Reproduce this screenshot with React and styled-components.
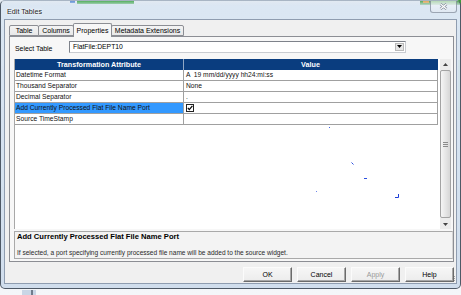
import React from "react";
import styled, { createGlobalStyle } from "styled-components";

const Global = createGlobalStyle`
  html, body { margin: 0; padding: 0; }
  body {
    width: 461px; height: 295px; overflow: hidden;
    background: #eef2f6;
    font-family: "Liberation Sans", Arial, sans-serif;
  }
  * { box-sizing: border-box; }
`;

const Desktop = styled.div`
  position: relative;
  width: 461px;
  height: 295px;
  overflow: hidden;
  background: linear-gradient(180deg, #e4ebf2 0%, #eef2f6 60%, #f4f6f9 100%);
`;

const BgPatch = styled.div`
  position: absolute;
  left: ${(p) => p.$x}px;
  top: ${(p) => p.$y}px;
  width: ${(p) => p.$w}px;
  height: ${(p) => p.$h}px;
  background: ${(p) => p.$c};
`;

const Window = styled.div`
  position: absolute;
  left: 0;
  top: 0;
  width: 461px;
  height: 289px;
  display: flex;
  flex-direction: column;
  padding: 0 3px 4px 3px;
  border: 1px solid #4e5966;
  border-top-color: rgba(78, 89, 102, 0.3);
  border-radius: 5px;
  background: linear-gradient(
    180deg,
    rgba(214, 227, 241, 0.2) 0px,
    rgba(218, 230, 243, 0.92) 5px,
    rgba(206, 220, 236, 0.95) 100%
  );
`;

const TitleBar = styled.div`
  height: 19px;
  display: flex;
  align-items: flex-start;
  justify-content: space-between;
  padding-left: 3px;
`;

const Title = styled.div`
  margin-top: 6px;
  font-size: 7.2px;
  line-height: 10px;
  color: #1b1b1b;
  text-shadow: 0 0 3px #ffffff, 0 0 2px #ffffff;
`;

const CloseBtn = styled.div`
  width: 27px;
  height: 12px;
  display: flex;
  align-items: center;
  justify-content: center;
  border: 1px solid rgba(90, 102, 120, 0.55);
  border-top: none;
  border-radius: 0 0 3px 3px;
  background: linear-gradient(180deg, rgba(255, 255, 255, 0.55), rgba(225, 233, 242, 0.7));
`;

const Client = styled.div`
  position: relative;
  flex: 1;
  display: flex;
  flex-direction: column;
  padding: 3px 2px 1px 4px;
  background: #f0f0f0;
  border: 1px solid #8f9db0;
`;

const TabStrip = styled.div`
  height: 13px;
  display: flex;
  align-items: flex-end;
`;

const Tab = styled.div`
  position: relative;
  z-index: ${(p) => (p.$active ? 1 : 0)};
  width: ${(p) => p.$w}px;
  height: ${(p) => (p.$active ? 14 : 11)}px;
  margin-bottom: ${(p) => (p.$active ? -1 : 0)}px;
  margin-left: ${(p) => (p.$first ? 0 : -1)}px;
  display: flex;
  align-items: ${(p) => (p.$active ? "flex-start" : "center")};
  justify-content: center;
  padding-top: ${(p) => (p.$active ? 2 : 0)}px;
  border: 1px solid #8c8e94;
  border-bottom: ${(p) => (p.$active ? "none" : "1px solid #8c8e94")};
  border-radius: 2px 2px 0 0;
  background: ${(p) =>
    p.$active ? "#f7f7f7" : "linear-gradient(180deg, #f4f4f4 0%, #e8e8e8 100%)"};
  font-size: 7px;
  line-height: 9px;
  color: #000;
  white-space: nowrap;
`;

const TabPage = styled.div`
  height: 226px;
  display: flex;
  flex-direction: column;
  padding: 3px 0 0 4px;
  border: 1px solid #8c8e94;
  background: #f7f7f7;
`;

const SelectRow = styled.div`
  height: 13px;
  display: flex;
  align-items: center;
`;

const Label = styled.div`
  width: 55px;
  padding-left: 1px;
  padding-top: 3px;
  font-size: 6.9px;
  color: #000;
`;

const Combo = styled.div`
  width: 337px;
  height: 12px;
  display: flex;
  align-items: center;
  justify-content: space-between;
  padding: 0 1px 0 3px;
  border: 1px solid #7e828a;
  border-right-color: #c9ccd1;
  border-bottom-color: #c9ccd1;
  background: #ffffff;
  font-size: 6.8px;
  color: #000;
`;

const DropBtn = styled.div`
  width: 9px;
  height: 8px;
  display: flex;
  align-items: center;
  justify-content: center;
  background: #e6e6e6;
  border: 1px solid #b9b9b9;
`;

const PropGrid = styled.div`
  margin-top: 6px;
  width: 439px;
  display: flex;
  flex-direction: column;
`;

const GridView = styled.div`
  height: 170px;
  width: 437px;
  display: flex;
  border-left: 1px solid #a8a8a8;
  background: #ffffff;
`;

const TableWrap = styled.div`
  position: relative;
  width: 425px;
  background: #ffffff;
`;

const Row = styled.div`
  display: grid;
  grid-template-columns: 169px 254px;
  height: 11px;
`;

const HeadCell = styled.div`
  height: 11px;
  background: #0a3d7f;
  border-right: 1px solid ${(p) => (p.$last ? "#0a3d7f" : "rgba(255,255,255,0.55)")};
  color: #ffffff;
  font-weight: bold;
  font-size: 7.2px;
  line-height: 11px;
  text-align: center;
  white-space: nowrap;
`;

const Cell = styled.div`
  height: 11px;
  display: flex;
  align-items: center;
  padding-left: ${(p) => (p.$value ? 2 : 1)}px;
  border-right: 1px solid #a0a0a0;
  border-bottom: 1px solid #a0a0a0;
  background: ${(p) => (p.$selected ? "#3399ff" : "#ffffff")};
  color: #111;
  font-size: 6.7px;
  line-height: 10px;
  white-space: pre;
  overflow: hidden;
`;

const Marks = styled.svg`
  position: absolute;
  left: 0;
  top: 0;
  pointer-events: none;
`;

const ScrollBar = styled.div`
  margin-left: 1px;
  width: 11px;
  display: flex;
  flex-direction: column;
  background: #ececec;
`;

const ScrollBtn = styled.div`
  height: 10px;
  display: flex;
  align-items: center;
  justify-content: center;
`;

const Thumb = styled.div`
  flex: 1;
  margin: 1px 0;
  display: flex;
  align-items: center;
  justify-content: center;
  border: 1px solid #a3a3a3;
  border-radius: 2px;
  background: linear-gradient(90deg, #f5f5f5 0%, #e6e6e6 50%, #d6d6d6 100%);
`;

const DescBox = styled.div`
  margin-top: 2px;
  height: 28px;
  width: 439px;
  padding: 0 0 0 2px;
  border: 1px solid #a9a9a9;
  border-right-color: #d4d4d4;
  background: #f3f3f3;
`;

const DescTitle = styled.div`
  font-weight: bold;
  font-size: 7.6px;
  line-height: 9px;
  color: #000;
  white-space: nowrap;
`;

const DescText = styled.div`
  margin-top: 7px;
  font-size: 6.55px;
  line-height: 9px;
  color: #2a2a2a;
  white-space: nowrap;
`;

const ButtonRow = styled.div`
  margin-top: 5px;
  display: flex;
  justify-content: flex-end;
  gap: 5px;
`;

const Btn = styled.div`
  width: 49px;
  height: 15px;
  display: flex;
  align-items: center;
  justify-content: center;
  border: 1px solid;
  border-color: #fbfbfb #6b6b6b #6b6b6b #fbfbfb;
  box-shadow: inset -1px -1px 0 #a7a7a7;
  background: linear-gradient(180deg, #f6f6f6 0%, #ececec 100%);
  font-size: 7px;
  color: ${(p) => (p.$disabled ? "#9a9a9a" : "#000")};
`;

const Grip = styled.svg`
  position: absolute;
  right: 0;
  bottom: 0;
`;

const rows = [
  { name: "Datetime Format", value: "A  19 mm/dd/yyyy hh24:mi:ss" },
  { name: "Thousand Separator", value: "None" },
  { name: "Decimal Separator", value: "." },
  { name: "Add Currently Processed Flat File Name Port", check: true, selected: true },
  { name: "Source TimeStamp", value: "" },
];

const tabs = [
  { label: "Table", w: 30 },
  { label: "Columns", w: 36 },
  { label: "Properties", w: 39, active: true },
  { label: "Metadata Extensions", w: 73 },
];

function CheckBox() {
  return (
    <svg width="8" height="8" viewBox="0 0 8 8">
      <rect x="0.5" y="0.5" width="7" height="7" fill="#fff" stroke="#222" />
      <path d="M1.8 3.8 L3.3 5.6 L6.4 1.9" fill="none" stroke="#000" strokeWidth="1.2" />
    </svg>
  );
}

export default function App() {
  return (
    <Desktop>
      <Global />
      <BgPatch $x={70} $y={0} $w={5} $h={3} $c="#4a7fd0" />
      <BgPatch $x={77} $y={0} $w={57} $h={4} $c="#36a33a" />
      <BgPatch $x={420} $y={0} $w={41} $h={5} $c="#3f9c38" />
      <BgPatch $x={423} $y={0} $w={6} $h={3} $c="#e49a35" />
      <BgPatch $x={458} $y={60} $w={3} $h={60} $c="#9ccf8c" />
      <BgPatch $x={22} $y={290} $w={14} $h={5} $c="#c9d6e6" />
      <BgPatch $x={31} $y={290} $w={2} $h={5} $c="#6f7c8c" />
      <Window>
        <TitleBar>
          <Title>Edit Tables</Title>
          <CloseBtn>
            <svg width="9" height="7" viewBox="0 0 9 7">
              <path d="M1.5 1 L7.5 6 M7.5 1 L1.5 6" stroke="#7d8795" strokeWidth="2.4" />
              <path d="M1.5 1 L7.5 6 M7.5 1 L1.5 6" stroke="#ffffff" strokeWidth="1.2" />
            </svg>
          </CloseBtn>
        </TitleBar>
        <Client>
          <TabStrip>
            {tabs.map((t, i) => (
              <Tab key={t.label} $w={t.w} $active={t.active} $first={i === 0}>
                {t.label}
              </Tab>
            ))}
          </TabStrip>
          <TabPage>
            <SelectRow>
              <Label>Select Table</Label>
              <Combo>
                <span>FlatFile:DEPT10</span>
                <DropBtn>
                  <svg width="5" height="3" viewBox="0 0 5 3">
                    <path d="M0 0 H5 L2.5 3 Z" fill="#000" />
                  </svg>
                </DropBtn>
              </Combo>
            </SelectRow>
            <PropGrid>
              <GridView>
                <TableWrap>
                  <Row>
                    <HeadCell>Transformation Attribute</HeadCell>
                    <HeadCell $last>Value</HeadCell>
                  </Row>
                  {rows.map((r) => (
                    <Row key={r.name}>
                      <Cell $selected={r.selected}>{r.name}</Cell>
                      <Cell $value>{r.check ? <CheckBox /> : r.value}</Cell>
                    </Row>
                  ))}
                  <Marks width="425" height="170" viewBox="0 0 425 170">
                    <rect x="314" y="68" width="1" height="1" fill="#3b63e6" />
                    <path d="M336.5 103.5 L338.5 105.5" stroke="#2a4fe0" strokeWidth="1" />
                    <rect x="349" y="119" width="3" height="1" fill="#2a4fe0" />
                    <rect x="301" y="132" width="1" height="1" fill="#6f86ea" />
                    <path d="M380 138.5 H383.5 V135" fill="none" stroke="#1f3fd8" strokeWidth="1" />
                  </Marks>
                </TableWrap>
                <ScrollBar>
                  <ScrollBtn>
                    <svg width="5" height="3" viewBox="0 0 5 3">
                      <path d="M0 3 H5 L2.5 0 Z" fill="#444" />
                    </svg>
                  </ScrollBtn>
                  <Thumb>
                    <svg width="5" height="5" viewBox="0 0 5 5">
                      <path d="M0 0.5 H5 M0 2.5 H5 M0 4.5 H5" stroke="#8a8a8a" strokeWidth="1" />
                    </svg>
                  </Thumb>
                  <ScrollBtn>
                    <svg width="5" height="3" viewBox="0 0 5 3">
                      <path d="M0 0 H5 L2.5 3 Z" fill="#444" />
                    </svg>
                  </ScrollBtn>
                </ScrollBar>
              </GridView>
              <DescBox>
                <DescTitle>Add Currently Processed Flat File Name Port</DescTitle>
                <DescText>
                  If selected, a port specifying currently processed file name will be added to the source widget.
                </DescText>
              </DescBox>
            </PropGrid>
          </TabPage>
          <ButtonRow>
            <Btn>OK</Btn>
            <Btn>Cancel</Btn>
            <Btn $disabled>Apply</Btn>
            <Btn>Help</Btn>
          </ButtonRow>
          <Grip width="8" height="8" viewBox="0 0 8 8">
            <g fill="#a0a0a0">
              <rect x="6" y="1" width="1" height="1" />
              <rect x="4" y="3" width="1" height="1" />
              <rect x="6" y="3" width="1" height="1" />
              <rect x="2" y="5" width="1" height="1" />
              <rect x="4" y="5" width="1" height="1" />
              <rect x="6" y="5" width="1" height="1" />
            </g>
          </Grip>
        </Client>
      </Window>
    </Desktop>
  );
}
